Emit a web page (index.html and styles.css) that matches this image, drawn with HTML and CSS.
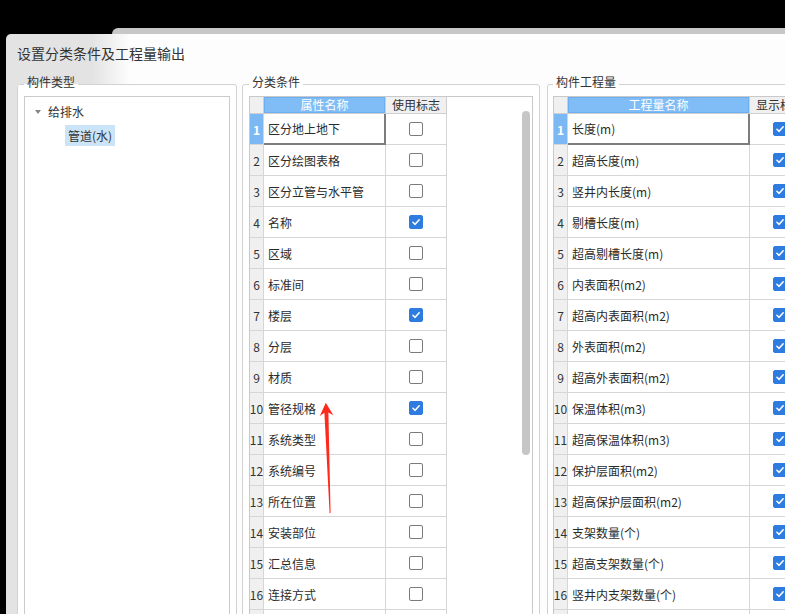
FILE: index.html
```html
<!DOCTYPE html>
<html lang="zh-CN">
<head>
<meta charset="utf-8">
<title>设置分类条件及工程量输出</title>
<link rel="stylesheet" href="styles.css">
</head>
<body>
<div class="behind"></div>
<div class="dialog">
  <div class="title">设置分类条件及工程量输出</div>
  <div class="groups">
    <fieldset class="group g1">
      <legend>构件类型</legend>
      <div class="tree">
        <div class="tree-row"><span class="caret"></span>给排水</div>
        <div class="tree-row child"><span class="sel">管道(水)</span></div>
      </div>
    </fieldset>

    <fieldset class="group g2">
      <legend>分类条件</legend>
      <div class="gridbox">
        <div class="grid cond">
          <div class="c hd"></div><div class="c hd active">属性名称</div><div class="c hd">使用标志</div>
          <div class="c num cur">1</div><div class="c name focus">区分地上地下</div><div class="c flag"><span class="cb"></span></div>
          <div class="c num">2</div><div class="c name">区分绘图表格</div><div class="c flag"><span class="cb"></span></div>
          <div class="c num">3</div><div class="c name">区分立管与水平管</div><div class="c flag"><span class="cb"></span></div>
          <div class="c num">4</div><div class="c name">名称</div><div class="c flag"><span class="cb on"><svg viewBox="0 0 14 14"><path d="M3.4 7.3 L6 9.7 L10.7 4.4"/></svg></span></div>
          <div class="c num">5</div><div class="c name">区域</div><div class="c flag"><span class="cb"></span></div>
          <div class="c num">6</div><div class="c name">标准间</div><div class="c flag"><span class="cb"></span></div>
          <div class="c num">7</div><div class="c name">楼层</div><div class="c flag"><span class="cb on"><svg viewBox="0 0 14 14"><path d="M3.4 7.3 L6 9.7 L10.7 4.4"/></svg></span></div>
          <div class="c num">8</div><div class="c name">分层</div><div class="c flag"><span class="cb"></span></div>
          <div class="c num">9</div><div class="c name">材质</div><div class="c flag"><span class="cb"></span></div>
          <div class="c num">10</div><div class="c name">管径规格</div><div class="c flag"><span class="cb on"><svg viewBox="0 0 14 14"><path d="M3.4 7.3 L6 9.7 L10.7 4.4"/></svg></span></div>
          <div class="c num">11</div><div class="c name">系统类型</div><div class="c flag"><span class="cb"></span></div>
          <div class="c num">12</div><div class="c name">系统编号</div><div class="c flag"><span class="cb"></span></div>
          <div class="c num">13</div><div class="c name">所在位置</div><div class="c flag"><span class="cb"></span></div>
          <div class="c num">14</div><div class="c name">安装部位</div><div class="c flag"><span class="cb"></span></div>
          <div class="c num">15</div><div class="c name">汇总信息</div><div class="c flag"><span class="cb"></span></div>
          <div class="c num">16</div><div class="c name">连接方式</div><div class="c flag"><span class="cb"></span></div>
          <div class="c num"></div><div class="c name"></div><div class="c flag"></div>
        </div>
        <div class="thumb"></div>
      </div>
    </fieldset>

    <fieldset class="group g3">
      <legend>构件工程量</legend>
      <div class="gridbox">
        <div class="grid qty">
          <div class="c hd"></div><div class="c hd active">工程量名称</div><div class="c hd">显示标志</div>
          <div class="c num cur">1</div><div class="c name focus">长度(m)</div><div class="c flag"><span class="cb on"><svg viewBox="0 0 14 14"><path d="M3.4 7.3 L6 9.7 L10.7 4.4"/></svg></span></div>
          <div class="c num">2</div><div class="c name">超高长度(m)</div><div class="c flag"><span class="cb on"><svg viewBox="0 0 14 14"><path d="M3.4 7.3 L6 9.7 L10.7 4.4"/></svg></span></div>
          <div class="c num">3</div><div class="c name">竖井内长度(m)</div><div class="c flag"><span class="cb on"><svg viewBox="0 0 14 14"><path d="M3.4 7.3 L6 9.7 L10.7 4.4"/></svg></span></div>
          <div class="c num">4</div><div class="c name">剔槽长度(m)</div><div class="c flag"><span class="cb on"><svg viewBox="0 0 14 14"><path d="M3.4 7.3 L6 9.7 L10.7 4.4"/></svg></span></div>
          <div class="c num">5</div><div class="c name">超高剔槽长度(m)</div><div class="c flag"><span class="cb on"><svg viewBox="0 0 14 14"><path d="M3.4 7.3 L6 9.7 L10.7 4.4"/></svg></span></div>
          <div class="c num">6</div><div class="c name">内表面积(m2)</div><div class="c flag"><span class="cb on"><svg viewBox="0 0 14 14"><path d="M3.4 7.3 L6 9.7 L10.7 4.4"/></svg></span></div>
          <div class="c num">7</div><div class="c name">超高内表面积(m2)</div><div class="c flag"><span class="cb on"><svg viewBox="0 0 14 14"><path d="M3.4 7.3 L6 9.7 L10.7 4.4"/></svg></span></div>
          <div class="c num">8</div><div class="c name">外表面积(m2)</div><div class="c flag"><span class="cb on"><svg viewBox="0 0 14 14"><path d="M3.4 7.3 L6 9.7 L10.7 4.4"/></svg></span></div>
          <div class="c num">9</div><div class="c name">超高外表面积(m2)</div><div class="c flag"><span class="cb on"><svg viewBox="0 0 14 14"><path d="M3.4 7.3 L6 9.7 L10.7 4.4"/></svg></span></div>
          <div class="c num">10</div><div class="c name">保温体积(m3)</div><div class="c flag"><span class="cb on"><svg viewBox="0 0 14 14"><path d="M3.4 7.3 L6 9.7 L10.7 4.4"/></svg></span></div>
          <div class="c num">11</div><div class="c name">超高保温体积(m3)</div><div class="c flag"><span class="cb on"><svg viewBox="0 0 14 14"><path d="M3.4 7.3 L6 9.7 L10.7 4.4"/></svg></span></div>
          <div class="c num">12</div><div class="c name">保护层面积(m2)</div><div class="c flag"><span class="cb on"><svg viewBox="0 0 14 14"><path d="M3.4 7.3 L6 9.7 L10.7 4.4"/></svg></span></div>
          <div class="c num">13</div><div class="c name">超高保护层面积(m2)</div><div class="c flag"><span class="cb on"><svg viewBox="0 0 14 14"><path d="M3.4 7.3 L6 9.7 L10.7 4.4"/></svg></span></div>
          <div class="c num">14</div><div class="c name">支架数量(个)</div><div class="c flag"><span class="cb on"><svg viewBox="0 0 14 14"><path d="M3.4 7.3 L6 9.7 L10.7 4.4"/></svg></span></div>
          <div class="c num">15</div><div class="c name">超高支架数量(个)</div><div class="c flag"><span class="cb on"><svg viewBox="0 0 14 14"><path d="M3.4 7.3 L6 9.7 L10.7 4.4"/></svg></span></div>
          <div class="c num">16</div><div class="c name">竖井内支架数量(个)</div><div class="c flag"><span class="cb on"><svg viewBox="0 0 14 14"><path d="M3.4 7.3 L6 9.7 L10.7 4.4"/></svg></span></div>
          <div class="c num"></div><div class="c name"></div><div class="c flag"></div>
        </div>
      </div>
    </fieldset>
  </div>
</div>
<svg class="arrow" viewBox="0 0 785 614" width="785" height="614">
  <polygon points="325.8,402.8 333.4,415.2 328.4,412.6 330.6,513 329.6,513 324.4,412.8 319.8,416" />
</svg>
</body>
</html>
```

FILE: styles.css
```css
html, body {
  margin: 0;
  padding: 0;
}

body {
  position: relative;
  width: 785px;
  height: 614px;
  overflow: hidden;
  background: #000;
  font-family: "Noto Sans CJK SC", sans-serif;
  font-size: 12px;
  color: #333;
}

.behind {
  position: absolute;
  left: 112px;
  top: 28px;
  width: 720px;
  height: 40px;
  background: #c7c7c7;
  border-radius: 6px 0 0 0;
}

.dialog {
  position: absolute;
  left: 6px;
  top: 34px;
  width: 840px;
  height: 640px;
  border-radius: 5px 5px 0 0;
  background: linear-gradient(to right, #e3e3e3 0, #e3e3e3 86px, #fdfdfd 124px, #fdfdfd 100%);
}

.title {
  padding: 9px 0 0 11px;
  font-size: 14px;
  line-height: 20px;
  color: #333;
}

.groups {
  display: flex;
  align-items: flex-start;
  margin: 11px 0 0 11px;
}

.group {
  flex: none;
  margin: 0;
  min-width: 0;
  box-sizing: border-box;
  height: 600px;
  padding: 2px 6px 0;
  border: 1px solid #d2d2d2;
  border-radius: 3px;
  background: #fff;
}

.group legend {
  padding: 0 3px 4px;
  font-size: 12px;
  line-height: 16px;
  color: #333;
}

.g1 {
  width: 220px;
}

.g2 {
  width: 298px;
  margin-left: 5px;
}

.g3 {
  width: 320px;
  margin-left: 7px;
  padding-left: 5px;
}

/* tree */
.tree {
  height: 560px;
  padding-top: 4px;
  border: 1px solid #cbcbcb;
  background: #fff;
}

.tree-row {
  display: flex;
  align-items: center;
  height: 22px;
  line-height: 22px;
}

.caret {
  width: 0;
  height: 0;
  margin: 0 7px 0 10px;
  border-left: 3px solid transparent;
  border-right: 3px solid transparent;
  border-top: 4px solid #858585;
}

.tree-row.child {
  height: 21px;
  margin-top: 2px;
  padding-left: 40px;
}

.sel {
  padding: 0 3px;
  line-height: 21px;
  background: #cce4f7;
}

/* grids */
.gridbox {
  display: flex;
  align-items: flex-start;
  height: 560px;
  border: 1px solid #c9c9c9;
  background: #fff;
}

.grid {
  flex: none;
  display: grid;
  grid-template-rows: 17px;
  grid-auto-rows: 31px;
  align-content: start;
}

.cond {
  grid-template-columns: 14px 122px 61px;
}

.qty {
  grid-template-columns: 14px 182px 61px;
}

.c {
  display: flex;
  align-items: center;
  box-sizing: border-box;
  min-width: 0;
  border-right: 1px solid #d6d6d6;
  border-bottom: 1px solid #d6d6d6;
  white-space: nowrap;
}

.hd {
  justify-content: center;
  background: #f0f0f0;
  line-height: 16px;
  border-color: #cfcfcf;
}

.hd.active {
  background: #80bcf6;
  color: #fff;
  box-shadow: inset 0 0 0 1px #6cb0f3;
}

.num {
  justify-content: center;
  background: #f0f0f0;
  color: #333;
  overflow: visible;
}

.num.cur {
  background: #7cb8f4;
  color: #fff;
  font-weight: bold;
}

.name {
  padding-left: 4px;
  color: #2b2b2b;
}

.name.focus {
  border-right: 2px solid #7d7d7d;
  border-bottom: 2px solid #7d7d7d;
}

.flag {
  justify-content: center;
}

.cb {
  display: block;
  width: 14px;
  height: 14px;
  box-sizing: border-box;
  border: 1px solid #7b7b7b;
  border-radius: 2px;
  background: #fff;
}

.cb.on {
  border-color: #2e7ce0;
  background: #2e7ce0;
}

.cb svg {
  display: block;
  width: 12px;
  height: 12px;
}

.cb svg path {
  fill: none;
  stroke: #fff;
  stroke-width: 1.8;
  stroke-linecap: round;
  stroke-linejoin: round;
}

.thumb {
  width: 8px;
  height: 344px;
  margin: 14px 2px 0 auto;
  border-radius: 4px;
  background: #c6c6c6;
}

.arrow {
  position: absolute;
  left: 0;
  top: 0;
  pointer-events: none;
}

.arrow polygon {
  fill: #ff2a1e;
}
```
